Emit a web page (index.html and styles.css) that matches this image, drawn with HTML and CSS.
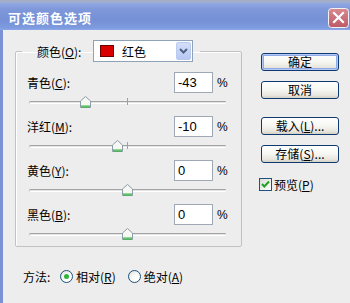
FILE: index.html
```html
<!DOCTYPE html>
<html lang="zh">
<head>
<meta charset="utf-8">
<title>可选颜色选项</title>
<link rel="stylesheet" href="styles.css">
</head>
<body>
<div class="window">
  <div class="titlebar">
    <span class="title">可选颜色选项</span>
    <span class="close">
      <svg width="21" height="20" viewBox="0 0 21 20">
        <defs>
          <linearGradient id="cg" x1="0" y1="0" x2="0" y2="1">
            <stop offset="0" stop-color="#D98A92"/>
            <stop offset="1" stop-color="#BC5A66"/>
          </linearGradient>
        </defs>
        <rect x="0.5" y="0.5" width="20" height="19" rx="3" fill="url(#cg)" stroke="#F2F2F2"/>
        <path d="M6 5 L15 14 M15 5 L6 14" stroke="#FFFFFF" stroke-width="2.2" stroke-linecap="square"/>
      </svg>
    </span>
  </div>
  <div class="client">
    <div class="main">
      <fieldset class="group">
        <legend class="legend">
          <span class="lbl">颜色(<u>O</u>):</span>
          <span class="combo">
            <span class="swatch"></span>
            <span class="combo-text">红色</span>
            <span class="combo-btn">
              <svg width="15" height="18" viewBox="0 0 15 18"><path d="M4 7 L7.5 10.5 L11 7" fill="none" stroke="#4D6185" stroke-width="2"/></svg>
            </span>
          </span>
        </legend>
        <div class="rows">
          <div class="row">
            <div class="field"><span class="lbl">青色(<u>C</u>):</span><span class="input">-43</span><span class="pct">%</span></div>
            <div class="slider"><span class="track"></span><span class="tick"></span>
              <svg class="thumb" style="left:28.5%" width="11" height="12" viewBox="0 0 11 12"><path d="M0.5 5 L5.5 0.5 L10.5 5 V11.5 H0.5 Z" fill="#F7F7F4" stroke="#8C9CA8"/><path d="M1 10 H10 M1 11 H10" stroke="#2FB33A"/></svg>
            </div>
          </div>
          <div class="row">
            <div class="field"><span class="lbl">洋红(<u>M</u>):</span><span class="input">-10</span><span class="pct">%</span></div>
            <div class="slider"><span class="track"></span><span class="tick"></span>
              <svg class="thumb" style="left:45%" width="11" height="12" viewBox="0 0 11 12"><path d="M0.5 5 L5.5 0.5 L10.5 5 V11.5 H0.5 Z" fill="#F7F7F4" stroke="#8C9CA8"/><path d="M1 10 H10 M1 11 H10" stroke="#2FB33A"/></svg>
            </div>
          </div>
          <div class="row">
            <div class="field"><span class="lbl">黄色(<u>Y</u>):</span><span class="input">0</span><span class="pct">%</span></div>
            <div class="slider"><span class="track"></span><span class="tick"></span>
              <svg class="thumb" style="left:50%" width="11" height="12" viewBox="0 0 11 12"><path d="M0.5 5 L5.5 0.5 L10.5 5 V11.5 H0.5 Z" fill="#F7F7F4" stroke="#8C9CA8"/><path d="M1 10 H10 M1 11 H10" stroke="#2FB33A"/></svg>
            </div>
          </div>
          <div class="row">
            <div class="field"><span class="lbl">黑色(<u>B</u>):</span><span class="input">0</span><span class="pct">%</span></div>
            <div class="slider"><span class="track"></span><span class="tick"></span>
              <svg class="thumb" style="left:50%" width="11" height="12" viewBox="0 0 11 12"><path d="M0.5 5 L5.5 0.5 L10.5 5 V11.5 H0.5 Z" fill="#F7F7F4" stroke="#8C9CA8"/><path d="M1 10 H10 M1 11 H10" stroke="#2FB33A"/></svg>
            </div>
          </div>
        </div>
      </fieldset>
      <div class="buttons">
        <div class="btn btn-default">确定</div>
        <div class="btn">取消</div>
        <div class="btn btn-gap">载入(<u>L</u>)...</div>
        <div class="btn">存储(<u>S</u>)...</div>
        <div class="check">
          <span class="box">
            <svg width="13" height="13" viewBox="0 0 13 13"><path d="M3 6 L5.3 8.5 L10 3.5" fill="none" stroke="#21A121" stroke-width="2"/></svg>
          </span>
          <span>预览(<u>P</u>)</span>
        </div>
      </div>
    </div>
    <div class="method">
      <span class="method-lbl">方法:</span>
      <span class="radio"><span class="circle on"></span><span>相对(<u>R</u>)</span></span>
      <span class="radio"><span class="circle"></span><span>绝对(<u>A</u>)</span></span>
    </div>
  </div>
</div>
</body>
</html>
```

FILE: styles.css
```css
* { box-sizing: border-box; }
html, body { margin: 0; padding: 0; }
body {
  width: 350px;
  height: 303px;
  overflow: hidden;
  font-family: "Noto Sans CJK SC", "Noto Sans", sans-serif;
  font-size: 12px;
  color: #000;
  background: #EDEDED;
}
u { text-decoration: underline; text-underline-offset: 1px; }

.window {
  width: 350px;
  height: 303px;
  display: flex;
  flex-direction: column;
  background: #EDEDED;
}

.titlebar {
  height: 30px;
  flex: none;
  display: flex;
  align-items: center;
  justify-content: space-between;
  padding: 5px 1px 0 8px;
  background: linear-gradient(to bottom, #A3AEC6 0, #A3AEC6 2px, #93A9E4 3px, #7F98DA 9px, #7590D6 20px, #7E9BE0 28px, #8DA8E6 30px);
}
.title {
  color: #FFFFFF;
  font-weight: bold;
  font-size: 13px;
  letter-spacing: 1px;
  line-height: 16px;
}
.close { display: flex; margin-top: 1px; }

.client {
  flex: 1;
  display: flex;
  flex-direction: column;
  border-left: 3px solid #7B91D6;
  padding: 10px 0 0 12px;
}

.main {
  display: flex;
  align-items: flex-start;
}

.group {
  width: 227px;
  height: 207px;
  margin: 0;
  padding: 0;
  border: 1px solid #C2C2C2;
  border-radius: 2px;
  box-shadow: inset 1px 1px 0 #FFFFFF;
}
.legend {
  margin-left: 6px;
  padding: 0 7px 0 15px;
  height: 22px;
  display: flex;
  align-items: center;
}
.legend .lbl { width: 56px; }

.combo {
  width: 100px;
  height: 22px;
  display: flex;
  align-items: center;
  background: #FFFFFF;
  border: 1px solid #8FA3B8;
  padding: 1px 1px 1px 6px;
}
.swatch {
  width: 14px;
  height: 12px;
  background: #D80000;
  border: 1px solid #6B0000;
  flex: none;
}
.combo-text { margin-left: 8px; flex: 1; }
.combo-btn {
  width: 15px;
  height: 18px;
  display: flex;
  border-radius: 2px;
  background: linear-gradient(to bottom, #D4DEF8, #B7C8F2);
  border: 1px solid #BACBF2;
}
.combo-btn svg { margin: -1px; }

.rows {
  padding: 10px 0 0 11px;
  display: flex;
  flex-direction: column;
}
.row { display: flex; flex-direction: column; }
.field {
  height: 21px;
  display: grid;
  grid-template-columns: 147px 39px auto;
  align-items: center;
}
.input {
  height: 21px;
  background: #FFFFFF;
  border: 1px solid #9FA9B5;
  font-family: "Liberation Sans", Arial, sans-serif;
  font-size: 13px;
  line-height: 19px;
  padding-left: 3px;
}
.pct {
  margin-left: 4px;
  font-family: "Liberation Sans", Arial, sans-serif;
  font-size: 12px;
}

.slider {
  position: relative;
  height: 23px;
  width: 197px;
  margin-left: 2px;
}
.track {
  position: absolute;
  left: 0;
  right: 0;
  top: 8px;
  height: 3px;
  border-top: 1px solid #A4A4A4;
  border-bottom: 1px solid #FFFFFF;
  border-left: 1px solid #C4C4C4;
  border-radius: 1px;
  background: #E4E4E4;
}
.tick {
  position: absolute;
  left: 98px;
  top: 5px;
  width: 1px;
  height: 7px;
  background: #A0A0A0;
}
.thumb {
  position: absolute;
  top: 3px;
  margin-left: -5.5px;
}

.buttons {
  margin-left: 19px;
  margin-top: 13px;
  display: flex;
  flex-direction: column;
  gap: 10px;
}
.btn {
  width: 78px;
  height: 18px;
  border: 1px solid #0F3A70;
  border-radius: 3px;
  background: linear-gradient(to bottom, #FFFFFF 0%, #F6F6F2 50%, #E6E4DC 85%, #D2CEC4 100%);
  display: flex;
  align-items: center;
  justify-content: center;
  line-height: 14px;
}
.btn-default {
  box-shadow: inset 0 0 0 1px #B6C9F4, inset 0 0 0 2px #8FAAEA;
}
.btn-gap { margin-top: 8px; }

.check {
  margin-top: 3px;
  margin-left: -2px;
  display: flex;
  align-items: center;
  gap: 2px;
}
.box {
  width: 13px;
  height: 13px;
  border: 1px solid #1C5180;
  background: linear-gradient(135deg, #DCDCD7, #FFFFFF);
  display: flex;
}
.box svg { margin: -1px; }

.method {
  margin-top: 21px;
  padding-left: 8px;
  display: flex;
  align-items: center;
  height: 16px;
}
.method-lbl { width: 37px; }
.radio {
  display: flex;
  align-items: center;
  gap: 3px;
  margin-right: 12px;
}
.circle {
  width: 13px;
  height: 13px;
  border-radius: 50%;
  border: 1px solid #1C5180;
  background: radial-gradient(circle at 70% 70%, #FFFFFF 30%, #DCDCD7 100%);
  display: flex;
  align-items: center;
  justify-content: center;
}
.circle.on::after {
  content: "";
  width: 5px;
  height: 5px;
  border-radius: 50%;
  background: #2CB53A;
}
```
